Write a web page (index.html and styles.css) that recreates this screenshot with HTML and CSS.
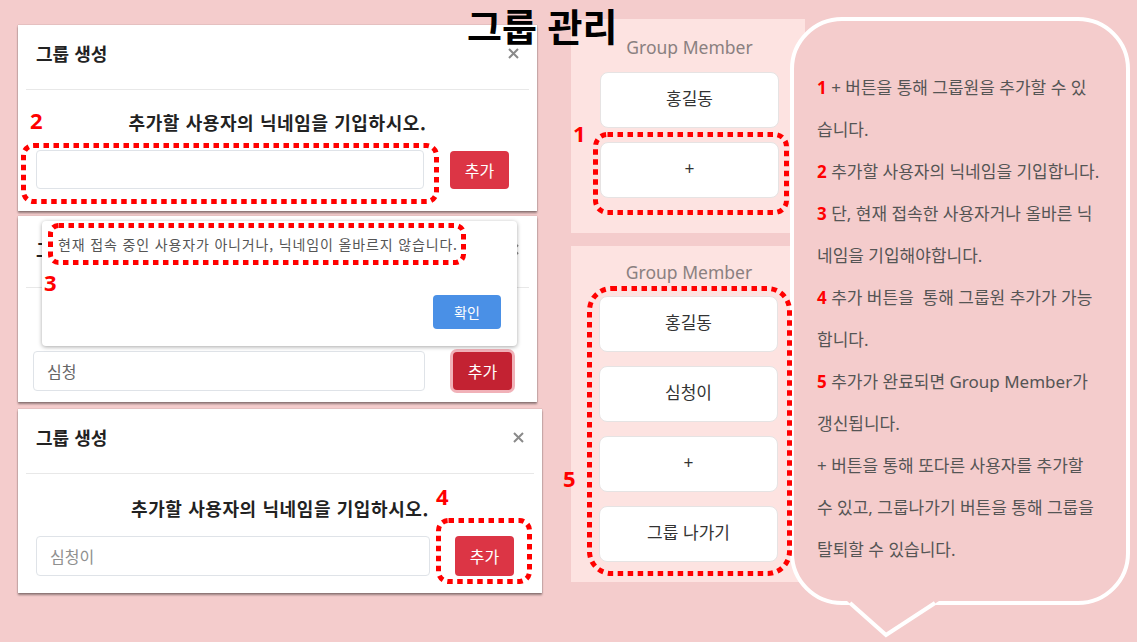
FILE: index.html
```html
<!DOCTYPE html>
<html lang="ko">
<head>
<meta charset="utf-8">
<title>그룹 관리</title>
<link rel="stylesheet" href="styles.css">
</head>
<body>
<div class="page">
  <div class="col-left">
    <section class="modal">
      <header class="modal-head">
        <h2 class="modal-title">그룹 생성</h2>
        <svg class="close" width="11" height="11" viewBox="0 0 11 11"><path d="M1 1L10 10M10 1L1 10" stroke="#8a8a8a" stroke-width="2" fill="none"/></svg>
      </header>
      <div class="modal-body">
        <p class="prompt">추가할 사용자의 닉네임을 기입하시오.</p>
        <div class="add-row">
          <input class="nick" type="text">
          <button class="btn-add">추가</button>
        </div>
      </div>
    </section>

    <section class="modal modal-alerted">
      <header class="modal-head">
        <h2 class="modal-title">그룹 생성</h2>
        <svg class="close" width="11" height="11" viewBox="0 0 11 11"><path d="M1 1L10 10M10 1L1 10" stroke="#8a8a8a" stroke-width="2" fill="none"/></svg>
      </header>
      <div class="modal-body">
        <p class="prompt">추가할 사용자의 닉네임을 기입하시오.</p>
        <div class="add-row">
          <input class="nick nick-value" type="text" value="심청">
          <button class="btn-add btn-focus">추가</button>
        </div>
      </div>
      <div class="alert">
        <p class="alert-text">현재 접속 중인 사용자가 아니거나, 닉네임이 올바르지 않습니다.</p>
        <button class="btn-ok">확인</button>
      </div>
    </section>

    <section class="modal modal-wide">
      <header class="modal-head">
        <h2 class="modal-title">그룹 생성</h2>
        <svg class="close" width="11" height="11" viewBox="0 0 11 11"><path d="M1 1L10 10M10 1L1 10" stroke="#8a8a8a" stroke-width="2" fill="none"/></svg>
      </header>
      <div class="modal-body">
        <p class="prompt">추가할 사용자의 닉네임을 기입하시오.</p>
        <div class="add-row">
          <input class="nick" type="text" placeholder="심청이">
          <button class="btn-add">추가</button>
        </div>
      </div>
    </section>
  </div>

  <div class="col-mid">
    <div class="panel panel-a">
      <div class="panel-title">Group Member</div>
      <div class="cards">
        <div class="card">홍길동</div>
        <div class="card">+</div>
      </div>
    </div>
    <div class="panel panel-b">
      <div class="panel-title">Group Member</div>
      <div class="cards">
        <div class="card">홍길동</div>
        <div class="card">심청이</div>
        <div class="card">+</div>
        <div class="card">그룹 나가기</div>
      </div>
    </div>
  </div>

  <div class="bubble">
    <p><span class="red">1</span> + 버튼을 통해 그룹원을 추가할 수 있</p>
    <p>습니다.</p>
    <p><span class="red">2</span> 추가할 사용자의 닉네임을 기입합니다.</p>
    <p><span class="red">3</span> 단, 현재 접속한 사용자거나 올바른 닉</p>
    <p>네임을 기입해야합니다.</p>
    <p><span class="red">4</span> 추가 버튼을&nbsp; 통해 그룹원 추가가 가능</p>
    <p>합니다.</p>
    <p><span class="red">5</span> 추가가 완료되면 Group Member가</p>
    <p>갱신됩니다.</p>
    <p>+ 버튼을 통해 또다른 사용자를 추가할</p>
    <p>수 있고, 그룹나가기 버튼을 통해 그룹을</p>
    <p>탈퇴할 수 있습니다.</p>
    <svg class="tail" width="100" height="40" viewBox="0 0 100 40">
      <polygon points="4,0 96,0 43,34" fill="#f4cccc"/>
      <polyline points="7,2 43,34 92,2" fill="none" stroke="#ffffff" stroke-width="4" stroke-linejoin="miter"/>
    </svg>
  </div>

  <h1 class="page-title">그룹 관리</h1>

  <svg class="dots d1" width="196" height="83"><rect x="2.5" y="2.5" width="191" height="78" rx="12"/></svg>
  <svg class="dots d2" width="418" height="61"><rect x="2.5" y="2.5" width="413" height="56" rx="10"/></svg>
  <svg class="dots d3" width="418" height="42"><rect x="2.5" y="2.5" width="413" height="37" rx="8"/></svg>
  <svg class="dots d4" width="96" height="66"><rect x="2.5" y="2.5" width="91" height="61" rx="10"/></svg>
  <svg class="dots d5" width="205" height="290"><rect x="2.5" y="2.5" width="200" height="285" rx="22"/></svg>

  <span class="num n1">1</span>
  <span class="num n2">2</span>
  <span class="num n3">3</span>
  <span class="num n4">4</span>
  <span class="num n5">5</span>
</div>
</body>
</html>
```

FILE: styles.css
```css
* { box-sizing: border-box; margin: 0; padding: 0; }
html, body { width: 1137px; height: 642px; overflow: hidden; }
body {
  background: #f4cccc;
  font-family: "Noto Sans", "Noto Sans CJK KR", sans-serif;
  color: #333;
}
.page {
  position: relative;
  display: flex;
  align-items: flex-start;
  width: 1137px;
  height: 642px;
}

/* ---------- left column: modals ---------- */
.col-left {
  display: flex;
  flex-direction: column;
  gap: 5px;
  width: 524px;
  margin: 25px 0 0 18px;
}
.modal {
  position: relative;
  width: 519px;
  background: #fff;
  padding: 0 8px;
  box-shadow: 0 2px 2px rgba(0, 0, 0, 0.4), 0 0 1px rgba(0, 0, 0, 0.35);
}
.modal-wide { width: 524px; margin-top: 2px; }
.modal-head {
  height: 65px;
  display: flex;
  align-items: flex-start;
  justify-content: space-between;
  padding: 16px 10px 0;
  border-bottom: 1px solid #e8e8e8;
}
.modal-title {
  font-family: "Noto Sans CJK KR", sans-serif;
  font-size: 18px;
  line-height: 24px;
  font-weight: 700;
  color: #222;
}
.close { margin-top: 7px; }
.modal-body { padding: 0 20px 22px 10px; }
.prompt {
  margin: 19px -20px 0 -10px;
  text-align: center;
  font-family: "Noto Sans CJK KR", sans-serif;
  font-size: 18px;
  letter-spacing: 0.6px;
  line-height: 26px;
  font-weight: 700;
  color: #222;
}
.add-row {
  display: flex;
  align-items: center;
  gap: 26px;
  margin-top: 15px;
}
.nick {
  flex: 1;
  height: 39px;
  border: 1px solid #dfe3e8;
  border-radius: 4px;
  padding: 0 13px;
  font-family: "Noto Sans CJK KR", sans-serif;
  font-size: 16px;
  color: #666;
  background: #fff;
  outline: none;
}
.nick::placeholder { color: #8f8f8f; }
.btn-add {
  width: 59px;
  height: 38px;
  border: none;
  border-radius: 4px;
  background: #dc3545;
  color: #fff;
  font-family: "Noto Sans CJK KR", sans-serif;
  font-size: 16px;
}
.btn-focus {
  background: #c32232;
  box-shadow: 0 0 0 3px rgba(225, 83, 97, 0.45);
}

.modal-alerted .modal-head { height: 72px; padding-top: 21px; }
.modal-alerted .modal-body { padding: 3px 17px 11px 7px; }
.modal-alerted .add-row { gap: 28px; }
.modal-alerted .nick { height: 40px; }
.modal-wide .modal-body { padding-top: 2px; padding-bottom: 17px; }
.modal-wide .nick { height: 40px; }
.modal-wide .add-row { gap: 25px; }
.modal-wide .btn-add { height: 40px; }

.alert {
  position: absolute;
  left: 24px;
  top: 5px;
  width: 475px;
  height: 125px;
  background: #fff;
  border-radius: 4px;
  box-shadow: 0 1px 4px rgba(0, 0, 0, 0.35);
  padding: 13px 16px 17px 16px;
  display: flex;
  flex-direction: column;
  justify-content: space-between;
  align-items: flex-start;
}
.alert-text {
  font-family: "Noto Sans CJK KR", sans-serif;
  font-size: 14px;
  letter-spacing: 0.85px;
  line-height: 20px;
  color: #555;
  white-space: nowrap;
}
.btn-ok {
  align-self: flex-end;
  width: 68px;
  height: 34px;
  border: none;
  border-radius: 4px;
  background: #4a90e6;
  color: #fff;
  font-family: "Noto Sans CJK KR", sans-serif;
  font-size: 14px;
}

/* ---------- middle column: member panels ---------- */
.col-mid {
  display: flex;
  flex-direction: column;
  gap: 13px;
  width: 234px;
  margin: 19px 0 0 29px;
}
.panel {
  background: #fde3e1;
  padding: 16px 26px 35px 29px;
}
.panel-b { padding: 14px 26px 20px 28px; }
.panel-title {
  text-align: center;
  font-size: 17.5px;
  line-height: 24px;
  color: #8a8080;
}
.cards {
  display: flex;
  flex-direction: column;
  gap: 14px;
  margin-top: 13px;
}
.panel-b .cards { margin-top: 12px; }
.card {
  height: 56px;
  width: 179px;
  background: #fff;
  border: 1px solid #e6e3e3;
  border-radius: 8px;
  display: flex;
  align-items: center;
  justify-content: center;
  padding-bottom: 5px;
  font-family: "Noto Sans CJK KR", sans-serif;
  font-size: 17px;
  color: #333;
}

/* ---------- speech bubble ---------- */
.bubble {
  position: relative;
  width: 340px;
  height: 588px;
  margin: 17px 0 0 -15px;
  border: 4px solid #fff;
  border-radius: 52px;
  background: #f4cccc;
  padding: 46px 0 0 23px;
}
.bubble p {
  font-family: "Noto Sans", "Noto Sans CJK KR", sans-serif;
  font-size: 17px;
  line-height: 42px;
  color: #555;
  white-space: nowrap;
}
.red { color: #ff0000; font-weight: 700; }
.tail {
  position: absolute;
  left: 49px;
  top: 100%;
  overflow: visible;
}

/* ---------- overlays ---------- */
.page-title {
  position: absolute;
  left: 467px;
  top: 0;
  font-family: "Noto Sans CJK KR", sans-serif;
  font-size: 38px;
  line-height: 50px;
  font-weight: 700;
  color: #000;
  white-space: nowrap;
}
.dots { position: absolute; overflow: visible; }
.dots rect {
  fill: none;
  stroke: #ff0000;
  stroke-width: 5;
  stroke-dasharray: 5.5 4.5;
}
.d1 { left: 593px; top: 132px; }
.d2 { left: 21px; top: 143px; }
.d3 { left: 48px; top: 223px; }
.d4 { left: 436px; top: 518px; }
.d5 { left: 587px; top: 286px; }

.num {
  position: absolute;
  font-family: "Noto Sans", sans-serif;
  font-weight: 700;
  font-size: 22px;
  line-height: 22px;
  color: #ff0000;
}
.n1 { left: 573px; top: 122px; }
.n2 { left: 30px; top: 109px; }
.n3 { left: 44px; top: 271px; }
.n4 { left: 436px; top: 485px; }
.n5 { left: 563px; top: 467px; }
```
